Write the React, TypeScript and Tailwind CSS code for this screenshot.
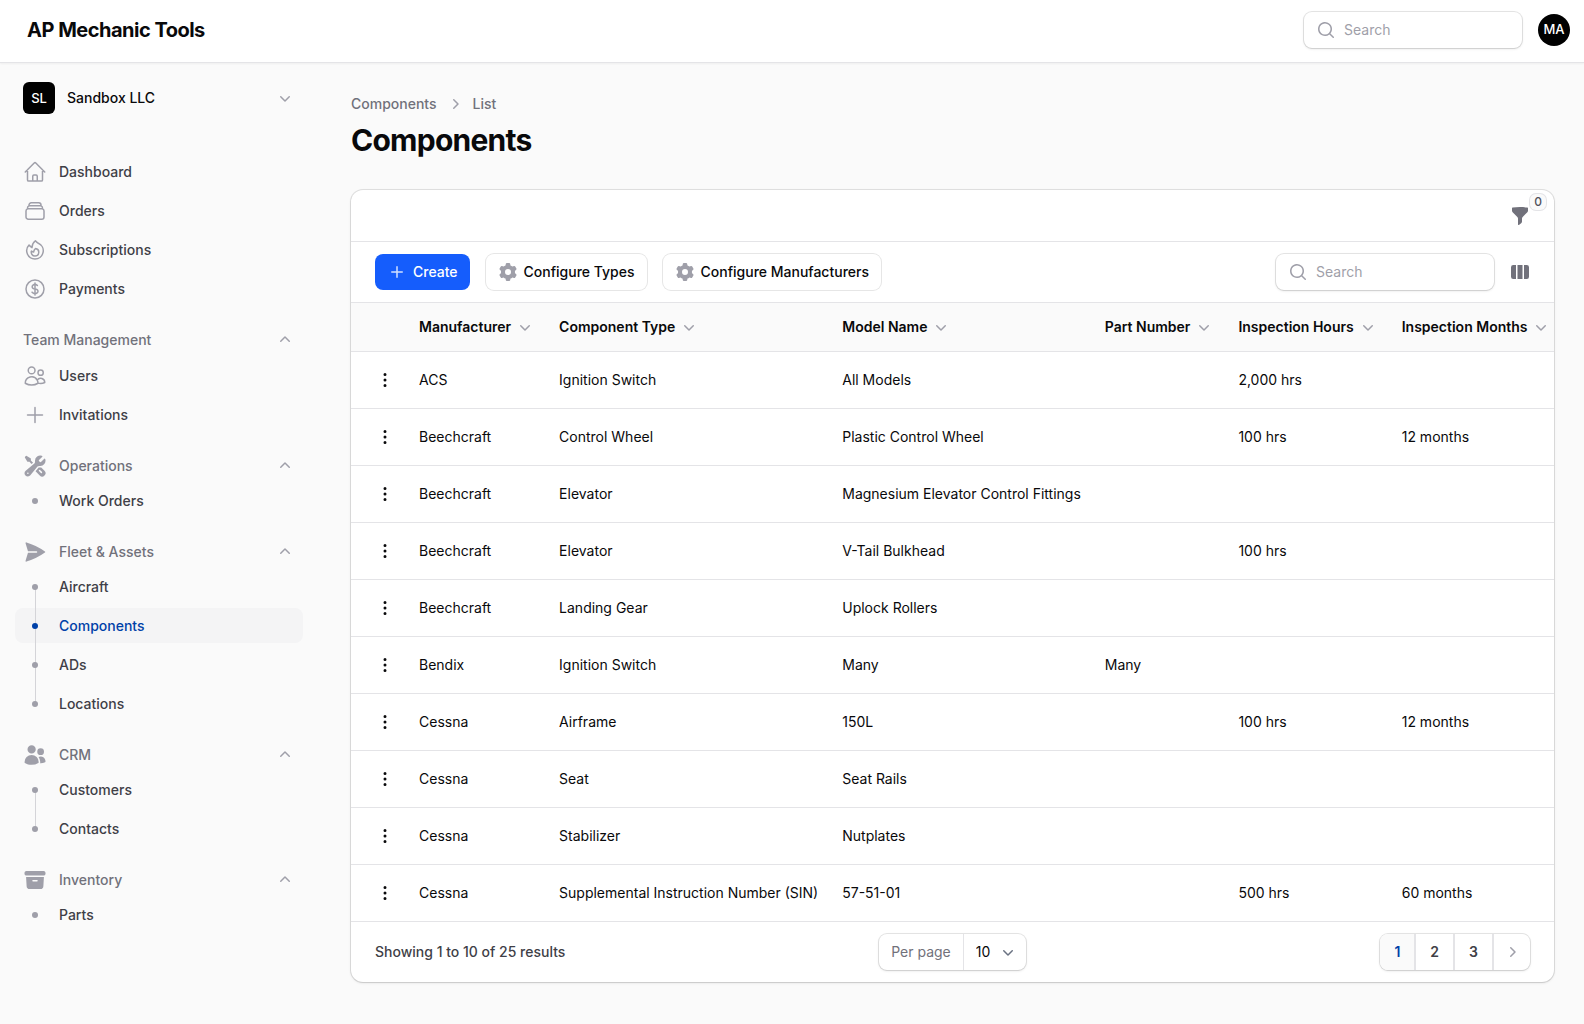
import type { ReactNode } from 'react'
import type { IconType } from 'react-icons'
import clsx from 'clsx'
import {
  HiArchiveBox,
  HiMiniChevronDown,
  HiMiniChevronRight,
  HiMiniChevronUp,
  HiMiniCog6Tooth,
  HiMiniEllipsisVertical,
  HiMiniFunnel,
  HiMiniMagnifyingGlass,
  HiMiniPlus,
  HiMiniViewColumns,
  HiOutlineCurrencyDollar,
  HiOutlineFire,
  HiOutlineHome,
  HiOutlinePlus,
  HiOutlineRectangleStack,
  HiOutlineUsers,
  HiPaperAirplane,
  HiUsers,
  HiWrenchScrewdriver,
} from 'react-icons/hi2'

type NavItem = { label: string; icon?: IconType; active?: boolean }
type NavGroup = { label?: string; icon?: IconType; items: NavItem[] }

const NAV: NavGroup[] = [
  {
    items: [
      { label: 'Dashboard', icon: HiOutlineHome },
      { label: 'Orders', icon: HiOutlineRectangleStack },
      { label: 'Subscriptions', icon: HiOutlineFire },
      { label: 'Payments', icon: HiOutlineCurrencyDollar },
    ],
  },
  {
    label: 'Team Management',
    items: [
      { label: 'Users', icon: HiOutlineUsers },
      { label: 'Invitations', icon: HiOutlinePlus },
    ],
  },
  { label: 'Operations', icon: HiWrenchScrewdriver, items: [{ label: 'Work Orders' }] },
  {
    label: 'Fleet & Assets',
    icon: HiPaperAirplane,
    items: [{ label: 'Aircraft' }, { label: 'Components', active: true }, { label: 'ADs' }, { label: 'Locations' }],
  },
  { label: 'CRM', icon: HiUsers, items: [{ label: 'Customers' }, { label: 'Contacts' }] },
  { label: 'Inventory', icon: HiArchiveBox, items: [{ label: 'Parts' }] },
]

const COLUMNS = ['Manufacturer', 'Component Type', 'Model Name', 'Part Number', 'Inspection Hours', 'Inspection Months']

const ROWS = [
  ['ACS', 'Ignition Switch', 'All Models', '', '2,000 hrs', ''],
  ['Beechcraft', 'Control Wheel', 'Plastic Control Wheel', '', '100 hrs', '12 months'],
  ['Beechcraft', 'Elevator', 'Magnesium Elevator Control Fittings', '', '', ''],
  ['Beechcraft', 'Elevator', 'V-Tail Bulkhead', '', '100 hrs', ''],
  ['Beechcraft', 'Landing Gear', 'Uplock Rollers', '', '', ''],
  ['Bendix', 'Ignition Switch', 'Many', 'Many', '', ''],
  ['Cessna', 'Airframe', '150L', '', '100 hrs', '12 months'],
  ['Cessna', 'Seat', 'Seat Rails', '', '', ''],
  ['Cessna', 'Stabilizer', 'Nutplates', '', '', ''],
  ['Cessna', 'Supplemental Instruction Number (SIN)', '57-51-01', '', '500 hrs', '60 months'],
]

function SearchField({ label }: { label: string }) {
  return (
    <label className="flex h-9 w-[218px] items-center gap-2 rounded-lg bg-white px-3 shadow-sm ring-1 ring-zinc-950/10">
      <HiMiniMagnifyingGlass className="size-5 shrink-0 text-zinc-400" />
      <input
        type="search"
        aria-label={label}
        placeholder="Search"
        className="w-full min-w-0 bg-transparent text-sm text-zinc-950 outline-none placeholder:text-zinc-400"
      />
    </label>
  )
}

function OutlinedButton({ children }: { children: ReactNode }) {
  return (
    <button className="flex h-9 items-center gap-1.5 rounded-lg bg-white px-3 text-sm font-medium text-zinc-950 ring-1 ring-zinc-950/10">
      <HiMiniCog6Tooth className="size-5 text-zinc-400" />
      {children}
    </button>
  )
}

function NavLink({ item, first, last }: { item: NavItem; first: boolean; last: boolean }) {
  const Icon = item.icon
  return (
    <li>
      <a
        href="#"
        className={clsx(
          'relative flex h-[35px] items-center gap-3 rounded-lg px-2 text-sm font-medium',
          item.active ? 'bg-zinc-100 text-[#0041a8]' : 'text-zinc-700'
        )}
      >
        {Icon ? (
          <Icon className="size-6 text-zinc-400" />
        ) : (
          <span className="flex w-6 justify-center">
            {!first && <span className="absolute -top-0.5 bottom-1/2 w-px bg-zinc-300" />}
            {!last && <span className="absolute top-1/2 -bottom-0.5 w-px bg-zinc-300" />}
            <span className={clsx('relative size-1.5 rounded-full', item.active ? 'bg-[#0041a8]' : 'bg-zinc-400')} />
          </span>
        )}
        {item.label}
      </a>
    </li>
  )
}

function Sidebar() {
  return (
    <aside className="w-[318px] shrink-0 px-[15px] pt-[19px]">
      <button className="flex w-full items-center gap-3 px-2 text-sm font-medium text-zinc-950">
        <span className="flex size-8 items-center justify-center rounded-md bg-black text-[13px] text-white">SL</span>
        Sandbox LLC
        <HiMiniChevronDown className="ml-auto size-5 text-zinc-400" />
      </button>

      <nav className="mt-10 flex flex-col gap-4">
        {NAV.map((group, i) => {
          const GroupIcon = group.icon
          return (
            <div key={i}>
              {group.label && (
                <button
                  className={clsx(
                    'flex w-full items-center gap-3 px-2 text-sm font-medium text-zinc-500',
                    GroupIcon ? 'h-[35px]' : 'h-9'
                  )}
                >
                  {GroupIcon && <GroupIcon className="size-6 text-zinc-400" />}
                  {group.label}
                  <HiMiniChevronUp className="ml-auto size-5 text-zinc-400" />
                </button>
              )}
              <ul className="flex flex-col gap-1">
                {group.items.map((item, j) => (
                  <NavLink key={item.label} item={item} first={j === 0} last={j === group.items.length - 1} />
                ))}
              </ul>
            </div>
          )
        })}
      </nav>
    </aside>
  )
}

function ComponentsTable() {
  return (
    <div className="overflow-hidden">
      <table className="min-w-full border-collapse text-left text-sm whitespace-nowrap text-zinc-950">
        <thead>
          <tr className="h-12 border-b border-zinc-200 bg-zinc-50">
            <th className="w-14" aria-label="Actions" />
            {COLUMNS.map((col) => (
              <th key={col} className="px-3 font-semibold">
                <button className="flex items-center gap-1">
                  {col}
                  <HiMiniChevronDown className="size-5 shrink-0 text-zinc-400" />
                </button>
              </th>
            ))}
          </tr>
        </thead>
        <tbody>
          {ROWS.map((row, i) => (
            <tr key={i} className="h-[57px] border-b border-zinc-200">
              <td className="pr-3 pl-6">
                <button aria-label="Row actions" className="block">
                  <HiMiniEllipsisVertical className="size-5" />
                </button>
              </td>
              {row.map((cell, j) => (
                <td key={j} className="px-3">
                  {cell}
                </td>
              ))}
            </tr>
          ))}
        </tbody>
      </table>
    </div>
  )
}

function Pagination() {
  return (
    <div className="grid grid-cols-[1fr_auto_1fr] items-center px-6 py-3">
      <span className="text-sm font-medium text-zinc-700">Showing 1 to 10 of 25 results</span>

      <div className="flex h-9 items-center rounded-lg bg-white text-sm shadow-sm ring-1 ring-zinc-950/10">
        <label htmlFor="per-page" className="flex h-full items-center border-r border-zinc-200 px-3 text-zinc-500">
          Per page
        </label>
        <div className="relative flex items-center">
          <select id="per-page" defaultValue="10" className="w-[62px] appearance-none bg-transparent pl-3 outline-none">
            <option>5</option>
            <option>10</option>
            <option>25</option>
            <option>50</option>
          </select>
          <HiMiniChevronDown className="pointer-events-none absolute right-2 size-5 text-gray-500" />
        </div>
      </div>

      <div className="flex h-9 divide-x-2 divide-zinc-200 justify-self-end rounded-lg bg-white text-sm font-semibold text-zinc-700 shadow-sm ring-1 ring-zinc-950/10">
        <button className="rounded-l-lg bg-zinc-50 px-[14px] text-[#0041a8]">1</button>
        <button className="px-[14px]">2</button>
        <button className="px-[14px]">3</button>
        <button aria-label="Next" className="px-2">
          <HiMiniChevronRight className="size-5 text-zinc-400" />
        </button>
      </div>
    </div>
  )
}

export default function App() {
  return (
    <div className="min-h-screen bg-zinc-50 font-['Inter',sans-serif] text-zinc-950 antialiased">
      <header className="flex h-[63px] items-center justify-between border-b border-zinc-200 bg-white pr-[14px] pb-0.5 pl-[27px] shadow-xs">
        <span className="text-xl font-bold tracking-tight">AP Mechanic Tools</span>
        <div className="flex items-center gap-4">
          <SearchField label="Global search" />
          <button className="flex size-8 items-center justify-center rounded-full bg-black text-[13px] font-medium text-white">
            MA
          </button>
        </div>
      </header>

      <div className="flex">
        <Sidebar />

        <main className="min-w-0 flex-1 pt-[31px] pr-[30px] pb-10 pl-[33px]">
          <nav className="flex items-center gap-2 text-sm font-medium text-zinc-500">
            <a href="#">Components</a>
            <HiMiniChevronRight className="size-5 text-zinc-400" />
            <a href="#">List</a>
          </nav>
          <h1 className="mt-2 text-3xl font-bold tracking-tight">Components</h1>

          <section className="mt-8 rounded-xl bg-white shadow-sm ring-1 ring-zinc-950/10">
            <div className="flex h-13 items-center justify-end border-b border-zinc-200 px-6">
              <button aria-label="Filters" className="relative">
                <HiMiniFunnel className="size-5 text-zinc-500" />
                <span className="absolute -top-3 left-5 flex size-4 items-center justify-center rounded-md bg-zinc-50 text-xs font-medium text-zinc-600 ring-1 ring-zinc-200">
                  0
                </span>
              </button>
            </div>

            <div className="flex items-center justify-between border-b border-zinc-200 px-6 py-3">
              <div className="flex items-center gap-4">
                <button className="flex h-9 items-center gap-1.5 rounded-lg bg-blue-600 px-3 text-sm font-medium text-white">
                  <HiMiniPlus className="size-5 text-white/80" />
                  Create
                </button>
                <OutlinedButton>Configure Types</OutlinedButton>
                <OutlinedButton>Configure Manufacturers</OutlinedButton>
              </div>
              <div className="flex items-center gap-4">
                <SearchField label="Search components" />
                <button aria-label="Columns">
                  <HiMiniViewColumns className="size-5 text-zinc-500" />
                </button>
              </div>
            </div>

            <ComponentsTable />
            <Pagination />
          </section>
        </main>
      </div>
    </div>
  )
}
